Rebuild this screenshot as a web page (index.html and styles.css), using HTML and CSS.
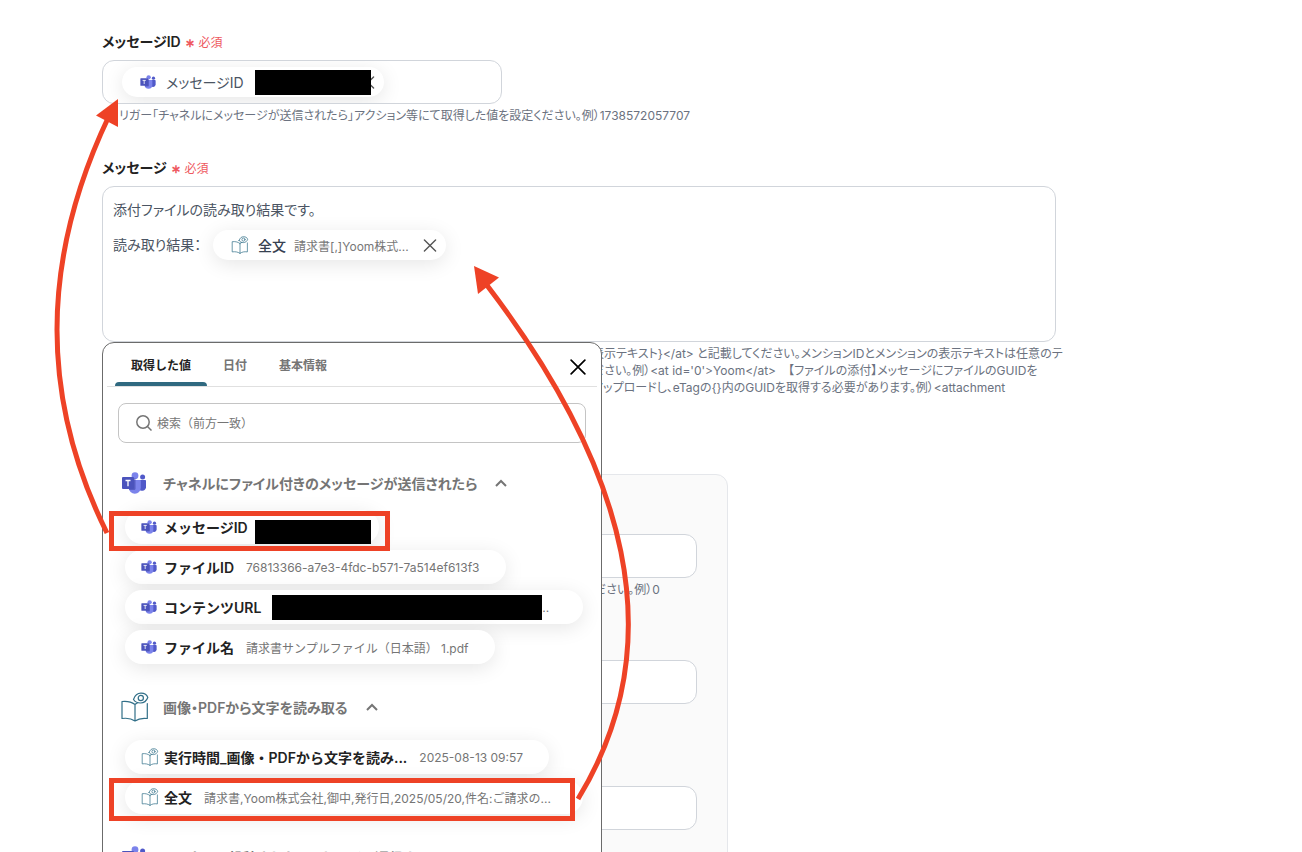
FILE: index.html
```html
<!DOCTYPE html>
<html lang="ja">
<head>
    <meta charset="UTF-8">
    <meta name="viewport" content="width=device-width, initial-scale=1.0">
    <title>メッセージ設定</title>
    <link rel="stylesheet" href="styles.css">
</head>
<body>
    <!-- Shared icons -->
    <svg class="sprite" aria-hidden="true">
        <symbol id="teams" viewBox="0 0 24 22">
            <circle cx="20.6" cy="5" r="2.500" fill="#5059c9"/>
            <path d="M16 8h7c.5 0 1 .4 1 1v6.300a4.200 4.200 0 0 1-8 1z" fill="#5059c9"/>
            <circle cx="13" cy="3.700" r="3.400" fill="#7b83eb"/>
            <path d="M7.500 8h10.300c.6 0 1 .4 1 1v6.800a6 6 0 0 1-12 0v-6.800z" fill="#7b83eb"/>
            <path d="M8 6.500h5.500v10a1.500 1.500 0 0 1-1.500 1.500H7z" fill="#3d44a8" opacity=".6"/>
            <rect x="0" y="5" width="12" height="12" rx="1" fill="#4b53bc"/>
            <path d="M3.500 8.500h5M6 8.500v5.700" stroke="#fff" stroke-width="1.300" fill="none"/>
        </symbol>
        <symbol id="book" viewBox="0 0 28 30">
            <g fill="none" stroke="#316f88" stroke-width="1.200" stroke-linejoin="round" stroke-linecap="round">
                <path d="M14 12.500C11 10.300 7 8.800 1 9.500V26.500c5-.7 9.500 0 13 2.500 3.500-2.500 7-3.200 12.300-2.500V11.500M14 12.500V29M14 12.500c.8-.7 1.700-1.300 2.700-1.700"/>
                <path d="M12.500 7.500c1.500-4.500 4-6.300 7.500-6.300s6 1.600 6.800 4.300c-1.500 4-4 5.500-7.300 5.500s-5.500-1.200-7-3.500z"/>
                <circle cx="19.800" cy="6" r="2.600"/>
            </g>
        </symbol>
        <symbol id="cross" viewBox="0 0 14 14">
            <path d="M1 1l12 12M13 1L1 13" fill="none" stroke="currentColor" stroke-width="1.500" stroke-linecap="round"/>
        </symbol>
        <symbol id="chevron" viewBox="0 0 12 8">
            <path d="M1 7l5-5 5 5" fill="none" stroke="currentColor" stroke-width="2"/>
        </symbol>
    </svg>

    <main class="page">
        <form class="form">
            <div class="field">
                <label class="label" for="message-id">メッセージID <span class="required"><b>∗</b> 必須</span></label>
                <div class="box box-short">
                    <span class="token">
                        <svg class="icon-teams"><use href="#teams"/></svg>
                        <span class="token-name">メッセージID</span>
                        <span class="mask"></span>
                        <button type="button" class="remove remove-covered" aria-label="削除"><svg><use href="#cross"/></svg></button>
                    </span>
                    <input type="text" id="message-id" class="box-input">
                </div>
                <p class="help help-after-arrow">リガー「チャネルにメッセージが送信されたら」アクション等にて取得した値を設定ください。例）1738572057707</p>
            </div>

            <div class="field field-message">
                <label class="label" for="message">メッセージ <span class="required"><b>∗</b> 必須</span></label>
                <div class="anchor">
                    <div class="box box-message">
                        <textarea id="message" class="line" rows="1">添付ファイルの読み取り結果です。</textarea>
                        <div class="line-row">
                            <input type="text" class="line line-prefix" aria-label="メッセージ 2行目" value="読み取り結果：">
                            <span class="token">
                                <svg class="icon-book"><use href="#book"/></svg>
                                <span class="token-name token-dark">全文</span>
                                <span class="token-value">請求書[,]Yoom株式...</span>
                                <button type="button" class="remove" aria-label="削除"><svg><use href="#cross"/></svg></button>
                            </span>
                        </div>
                    </div>

                    <!-- Value picker -->
                    <section class="picker">
                        <div class="tabs">
                            <button type="button" class="tab active">取得した値</button>
                            <button type="button" class="tab">日付</button>
                            <button type="button" class="tab">基本情報</button>
                            <button type="button" class="close" aria-label="閉じる"><svg><use href="#cross"/></svg></button>
                        </div>
                        <div class="search">
                            <svg class="search-icon" viewBox="0 0 16 16"><path d="M11.500 11.500L15.500 15.500" stroke="currentColor" stroke-width="1.500"/><circle cx="7" cy="7" r="6.200" fill="none" stroke="currentColor" stroke-width="1.500"/></svg>
                            <input type="search" placeholder="検索（前方一致）" aria-label="検索">
                        </div>

                        <button type="button" class="group">
                            <svg class="group-teams"><use href="#teams"/></svg>
                            <span>チャネルにファイル付きのメッセージが送信されたら</span>
                            <svg class="chevron"><use href="#chevron"/></svg>
                        </button>
                        <div class="values">
                            <button type="button" class="value value-masked"><svg class="icon-teams"><use href="#teams"/></svg><b>メッセージID</b><span class="mask"></span></button>
                            <button type="button" class="value"><svg class="icon-teams"><use href="#teams"/></svg><b>ファイルID</b><span class="sample">76813366-a7e3-4fdc-b571-7a514ef613f3</span></button>
                            <button type="button" class="value value-full"><svg class="icon-teams"><use href="#teams"/></svg><b>コンテンツURL</b><span class="mask mask-long"></span><span>..</span></button>
                            <button type="button" class="value"><svg class="icon-teams"><use href="#teams"/></svg><b>ファイル名</b><span class="sample">請求書サンプルファイル（日本語） 1.pdf</span></button>
                        </div>

                        <button type="button" class="group group-tall">
                            <svg class="group-book"><use href="#book"/></svg>
                            <span>画像・PDFから文字を読み取る</span>
                            <svg class="chevron"><use href="#chevron"/></svg>
                        </button>
                        <div class="values">
                            <button type="button" class="value"><svg class="icon-book"><use href="#book"/></svg><b>実行時間_画像・PDFから文字を読み...</b><span class="sample">2025-08-13 09:57</span></button>
                            <button type="button" class="value value-full"><svg class="icon-book"><use href="#book"/></svg><b>全文</b><span class="sample">請求書,Yoom株式会社,御中,発行日,2025/05/20,件名:ご請求の...</span></button>
                        </div>

                        <button type="button" class="group">
                            <svg class="group-teams"><use href="#teams"/></svg>
                            <span>チャネルに投稿されたメッセージに返信する</span>
                        </button>
                    </section>
                </div>
                <p class="help help-beside-picker">表示テキスト}&lt;/at&gt; と記載してください。メンションIDとメンションの表示テキストは任意のテ<br>ださい。例）&lt;at id='0'&gt;Yoom&lt;/at&gt;　【ファイルの添付】メッセージにファイルのGUIDを<br>アップロードし、eTagの{}内のGUIDを取得する必要があります。例）&lt;attachment</p>
            </div>

            <div class="card">
                <div class="card-field">
                    <input type="text" class="box card-input" aria-label="添付ファイル ID">
                    <p class="help">ださい。例）0</p>
                </div>
                <div class="card-field">
                    <input type="text" class="box card-input" aria-label="添付ファイル URL">
                </div>
                <div class="card-field">
                    <input type="text" class="box card-input" aria-label="添付ファイル名">
                </div>
            </div>
        </form>

        <!-- Arrows from the picked values to their fields -->
        <svg class="notes" viewBox="0 0 1302 852" aria-hidden="true">
            <g fill="none" stroke="#ee4226" stroke-width="5">
                <rect x="111.500" y="513.500" width="276" height="35"/>
                <rect x="111.500" y="780.500" width="461" height="38"/>
                <path d="M107 533C41 400 39 263 109 116"/>
                <path d="M578 799C674 642 627 468 486 284"/>
            </g>
            <path d="M118 99L96 115.500L118 127z" fill="#ee4226"/>
            <path d="M474 266L499 277.500L478 294z" fill="#ee4226"/>
        </svg>
    </main>
</body>
</html>
```

FILE: styles.css
```css
* {
    box-sizing: border-box;
}
body {
    font-family: Inter, "Noto Sans CJK JP", sans-serif;
    font-size: 14px;
    margin: 0;
    height: 100vh;
    overflow: hidden;
    background-color: #fff;
    color: #4b5563;
}
button,
input,
textarea {
    font: inherit;
    color: inherit;
    border: 0;
    padding: 0;
    margin: 0;
    background: none;
    outline: none;
}
svg {
    display: block;
    flex: none;
}
.sprite {
    position: absolute;
    width: 0;
    height: 0;
}
.page {
    position: relative;
    height: 100%;
    padding: 32px 102px 0;
    overflow: hidden;
}
.form {
    max-width: 954px;
    font-feature-settings: "palt";
}

/* Fields */
.field {
    margin-bottom: 34px;
}
.field-message {
    margin-bottom: 78px;
}
.label {
    display: block;
    height: 20px;
    line-height: 20px;
    margin-bottom: 8px;
    font-weight: 600;
    color: #222;
}
.required {
    margin-left: 1px;
    font-size: 12px;
    font-weight: 400;
    color: #ee5860;
}
.box {
    border: 1px solid #d1d5db;
    border-radius: 12px;
    background-color: #fff;
}
.box-short {
    display: flex;
    align-items: center;
    width: 400px;
    height: 44px;
    padding: 0 19px;
    overflow: hidden;
}
.box-input {
    flex: 1;
    min-width: 0;
}
.box-message {
    height: 156px;
    padding: 10px;
}
.line {
    display: block;
    width: 100%;
    height: 26px;
    line-height: 26px;
    resize: none;
    overflow: hidden;
}
.line-row {
    display: flex;
    align-items: center;
    gap: 4px;
    margin-top: 7px;
}
.line-prefix {
    width: 96px;
}
.help {
    margin: 3px 0 0;
    font-size: 12px;
    line-height: 17px;
    color: #6b7280;
    white-space: nowrap;
}
.help-after-arrow {
    padding-left: 17px;
}
.help-beside-picker {
    padding-left: 490px;
}

/* Tokens inside the fields */
.token {
    display: flex;
    align-items: center;
    height: 30px;
    padding: 0 8px 0 18px;
    border-radius: 15px;
    background-color: #fff;
    box-shadow: 0 4px 20px rgba(0, 0, 0, 0.1);
    white-space: nowrap;
}
.token-name {
    margin: 0 11px 0 10px;
}
.token-dark {
    margin: 0 8px 0 9px;
    font-weight: 500;
    color: #374151;
}
.token-value {
    font-size: 12px;
    color: #777;
}
.remove {
    margin-left: 13px;
}
.remove svg {
    width: 16px;
    height: 13px;
    color: #555;
}
.remove-covered {
    margin-left: -11px;
}
.mask {
    position: relative;
    width: 116px;
    height: 25px;
    background-color: #000;
}
.mask-long {
    width: 270px;
    margin-left: 4px;
}
.icon-teams {
    width: 16px;
    height: 14px;
}
.icon-book {
    width: 18px;
    height: 18px;
}

/* Value picker */
.anchor {
    position: relative;
}
.picker {
    position: absolute;
    z-index: 1;
    top: 100%;
    left: 0;
    width: 500px;
    height: 600px;
    padding: 0 4px;
    overflow: hidden;
    border: 1px solid #6b6b6b;
    border-radius: 12px;
    background-color: #fff;
    color: #757575;
}
.tabs {
    display: flex;
    height: 44px;
    padding-left: 8px;
    border-bottom: 1px solid #e0e0e0;
}
.tab {
    position: relative;
    padding: 0 16px;
    font-size: 12px;
    font-weight: 600;
    font-feature-settings: normal;
}
.active {
    color: #222;
}
.active::after {
    content: "";
    position: absolute;
    left: 0;
    right: 0;
    bottom: 0;
    height: 4px;
    border-radius: 4px 4px 0 0;
    background-color: #2f6980;
}
.close {
    margin-left: auto;
    padding: 4px 11px 0;
    color: #000;
}
.close svg {
    width: 16px;
    height: 16px;
}
.search {
    display: flex;
    align-items: center;
    gap: 5px;
    height: 40px;
    margin: 16px 11px 22px;
    padding: 0 17px;
    border: 1px solid #c4c4c4;
    border-radius: 8px;
    font-size: 12px;
    font-feature-settings: normal;
}
.search-icon {
    width: 16px;
    height: 16px;
}
.search input {
    flex: 1;
}
.search input::placeholder {
    color: #757575;
    opacity: 1;
}
.group {
    display: flex;
    align-items: center;
    height: 36px;
    margin-left: 14px;
    font-weight: 600;
}
.group-tall {
    margin-bottom: 6px;
}
.group span {
    margin: 0 18px 0 16px;
}
.group-teams {
    width: 26px;
    height: 22px;
}
.group-book {
    width: 28px;
    height: 30px;
    margin-right: -2px;
}
.chevron {
    width: 12px;
    height: 8px;
}
.values {
    display: flex;
    flex-direction: column;
    align-items: flex-start;
    gap: 6px;
    padding: 9px 14px 25px 18px;
}
.value {
    display: flex;
    align-items: center;
    max-width: 100%;
    height: 34px;
    padding: 0 26px 0 16px;
    border-radius: 17px;
    background-color: #fff;
    box-shadow: 0 4px 20px rgba(0, 0, 0, 0.1);
    font-size: 12px;
    font-feature-settings: normal;
    white-space: nowrap;
}
.value-full {
    width: 458px;
}
.value-masked {
    padding-right: 8px;
}
.value-masked .mask {
    align-self: flex-end;
    height: 24px;
}
.value b {
    margin: 0 7px;
    font-size: 14px;
    font-weight: 600;
    color: #222;
}
.value .icon-book {
    margin-right: -2px;
}
.sample {
    margin-left: 5px;
}

/* Card behind the picker */
.card {
    width: 626px;
    height: 500px;
    padding: 31px 30px;
    border: 1px solid #e5e7eb;
    border-radius: 12px;
    background-color: #fafafa;
}
.card-field {
    height: 126px;
    padding-top: 28px;
}
.card-input {
    display: block;
    width: 100%;
    height: 44px;
    border: 1px solid #d1d5db;
    background-color: #fff;
}
.card-field .help {
    padding-left: 461px;
}

/* Arrows */
.notes {
    position: absolute;
    z-index: 2;
    top: 0;
    left: 0;
    width: 1302px;
    height: 852px;
    pointer-events: none;
}
```
